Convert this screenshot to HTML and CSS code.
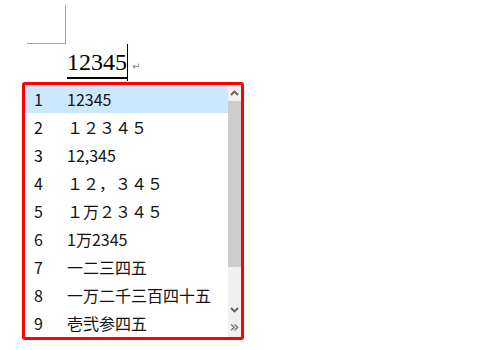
FILE: index.html
```html
<!DOCTYPE html>
<html>
<head>
<meta charset="utf-8">
<link rel="stylesheet" href="styles.css">
</head>
<body>
<div class="corner"></div>
<div class="docline">
  <span class="field">12345</span><span class="cursor"></span><span class="ret">↵</span>
</div>
<div class="popup">
  <div class="list">
    <div class="row sel"><span class="num">1</span><span class="txt">12345</span></div>
    <div class="row"><span class="num">2</span><span class="txt">１２３４５</span></div>
    <div class="row"><span class="num">3</span><span class="txt">12,345</span></div>
    <div class="row"><span class="num">4</span><span class="txt">１２，３４５</span></div>
    <div class="row"><span class="num">5</span><span class="txt">１万２３４５</span></div>
    <div class="row"><span class="num">6</span><span class="txt">1万2345</span></div>
    <div class="row"><span class="num">7</span><span class="txt">一二三四五</span></div>
    <div class="row"><span class="num">8</span><span class="txt">一万二千三百四十五</span></div>
    <div class="row"><span class="num">9</span><span class="txt">壱弐参四五</span></div>
  </div>
  <div class="scroll">
    <div class="sbtn"><svg width="9" height="6" viewBox="0 0 9 6"><path d="M1 5 L4.5 1.5 L8 5" fill="none" stroke="#606060" stroke-width="1.8"/></svg></div>
    <div class="thumb"></div>
    <div class="track"></div>
    <div class="sbtn"><svg width="9" height="6" viewBox="0 0 9 6"><path d="M1 1 L4.5 4.5 L8 1" fill="none" stroke="#606060" stroke-width="1.8"/></svg></div>
    <div class="more">»</div>
  </div>
</div>
</body>
</html>
```
FILE: styles.css
```css
html, body {
  margin: 0;
  padding: 0;
  background: #ffffff;
}
body {
  width: 500px;
  height: 350px;
  overflow: hidden;
  font-family: "Noto Sans CJK SC", "Noto Sans", sans-serif;
}
.corner {
  margin-left: 27px;
  margin-top: 5px;
  width: 39px;
  height: 39px;
  border-right: 1px solid #a0a0a0;
  border-bottom: 1px solid #a0a0a0;
  box-sizing: border-box;
}
.docline {
  margin-left: 67px;
  height: 38px;
  display: flex;
  align-items: flex-end;
}
.field {
  font-family: "Liberation Serif", serif;
  font-size: 24px;
  line-height: 24px;
  color: #000;
  border-bottom: 2px solid #000;
  padding-bottom: 3px;
  margin-bottom: 3px;
}
.cursor {
  width: 1px;
  height: 37px;
  background: #000;
  margin-bottom: 1px;
}
.ret {
  font-family: "DejaVu Sans", sans-serif;
  font-size: 10px;
  color: #808080;
  margin-left: 4px;
  margin-bottom: 10px;
}
.popup {
  margin-left: 22px;
  width: 222px;
  height: 258px;
  box-sizing: border-box;
  border: 3px solid #ff0000;
  border-radius: 3px;
  display: flex;
  background: #fff;
}
.list {
  width: 203px;
}
.row {
  height: 28px;
  display: flex;
  align-items: center;
  font-size: 16px;
  color: #111;
}
.row.sel {
  background: #cce8ff;
}
.num {
  width: 42px;
  flex: none;
  padding-left: 9px;
  box-sizing: border-box;
}
.txt {
  white-space: nowrap;
}
.scroll {
  width: 13px;
  display: flex;
  flex-direction: column;
  background: #f0f0f0;
}
.sbtn {
  height: 16px;
  display: flex;
  align-items: center;
  justify-content: center;
}
.thumb {
  height: 166px;
  background: #cdcdcd;
}
.track {
  flex: 1;
}
.more {
  height: 19px;
  font-family: "DejaVu Sans", sans-serif;
  font-size: 16px;
  line-height: 18px;
  color: #666;
  text-align: center;
}
```
